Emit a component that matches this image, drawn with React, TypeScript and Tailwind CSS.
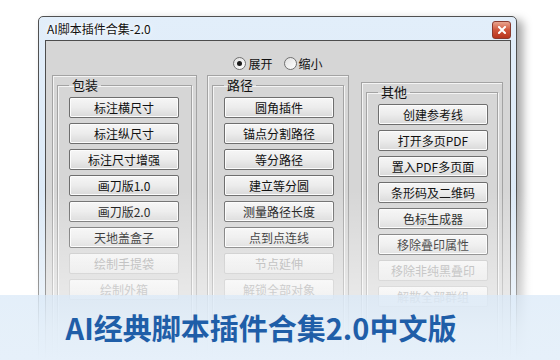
const ui = "font-['Noto_Sans_CJK_SC','Noto_Sans',sans-serif]";

type Item = { label: string; off?: boolean };

const baozhuang: Item[] = [
  { label: "标注横尺寸" },
  { label: "标注纵尺寸" },
  { label: "标注尺寸增强" },
  { label: "画刀版1.0" },
  { label: "画刀版2.0" },
  { label: "天地盖盒子" },
  { label: "绘制手提袋", off: true },
  { label: "绘制外箱", off: true },
];

const lujing: Item[] = [
  { label: "圆角插件" },
  { label: "锚点分割路径" },
  { label: "等分路径" },
  { label: "建立等分圆" },
  { label: "测量路径长度" },
  { label: "点到点连线" },
  { label: "节点延伸", off: true },
  { label: "解锁全部对象", off: true },
];

const qita: Item[] = [
  { label: "创建参考线" },
  { label: "打开多页PDF" },
  { label: "置入PDF多页面" },
  { label: "条形码及二维码" },
  { label: "色标生成器" },
  { label: "移除叠印属性" },
  { label: "移除非纯黑叠印", off: true },
  { label: "解散全部群组", off: true },
];

function Btn({ label, off }: Item) {
  return (
    <button
      className={
        "w-[110px] h-[21px] rounded-[2px] border text-[12px] leading-none flex items-center justify-center " +
        (off
          ? "border-[#c2c2c2] bg-gradient-to-b from-[#f4f4f4] to-[#e6e6e6] text-[#a8a8a8]"
          : "border-[#6e6e6e] bg-gradient-to-b from-[#f6f6f6] via-[#ececec] to-[#d9d9d9] text-[#111] shadow-[inset_0_0_0_1px_#fcfcfc]")
      }
    >
      {label}
    </button>
  );
}

function Group({ title, items, w }: { title: string; items: Item[]; w: string }) {
  return (
    <div className={"border border-[#a3a3a3] shadow-[inset_1px_1px_0_#f4f4f4] px-1 h-[320px] " + w}>
      <fieldset className="border border-[#a3a3a3] shadow-[inset_1px_1px_0_#f4f4f4,1px_1px_0_#f4f4f4] h-full pt-[3px] pl-[11px]">
        <legend className="px-[3px] text-[13px] leading-[18px] text-[#111]">{title}</legend>
        <div className="flex flex-col gap-[5px]">
          {items.map((it) => (
            <Btn key={it.label} {...it} />
          ))}
        </div>
      </fieldset>
    </div>
  );
}

function Radio({ label, on }: { label: string; on?: boolean }) {
  return (
    <label className="flex items-center gap-[2px] text-[12px] text-[#111]">
      <span className="w-[13px] h-[13px] rounded-full border border-[#707070] bg-gradient-to-br from-[#e0e0e0] to-white flex items-center justify-center">
        {on && <span className="w-[5px] h-[5px] rounded-full bg-[#1a1a1a]" />}
      </span>
      {label}
    </label>
  );
}

export default function App() {
  return (
    <div className={"w-[560px] h-[360px] bg-white relative overflow-hidden " + ui}>
      <div className="pt-4 pl-[38px]">
        {/* window */}
        <div className="w-[479px] h-[360px] border border-[#505050] rounded-t-[5px] bg-gradient-to-b from-[#e2eefa] to-[#d8e6f4] shadow-[6px_4px_10px_rgba(0,0,0,0.35)] flex flex-col">
          <div className="h-[23px] flex items-center justify-between pl-2 pr-[5px]">
            <span className="text-[12px] text-[#111] [text-shadow:0_0_6px_#fff,0_0_3px_#fff]">AI脚本插件合集-2.0</span>
            <button className="w-[19px] h-[18px] mt-[3px] rounded-[3px] border border-[#8a3a2e] bg-gradient-to-b from-[#e8a48f] via-[#cf553b] to-[#b8341d] flex items-center justify-center">
              <svg width="8" height="8" viewBox="0 0 8 8">
                <path d="M1 1L7 7M7 1L1 7" stroke="#fff" strokeWidth="2" strokeLinecap="square" />
              </svg>
            </button>
          </div>
          {/* client */}
          <div className="flex-1 ml-[6px] mr-[5px] border border-[#4d4d4d] bg-[#d6d6d6] overflow-hidden">
            <div className="flex justify-center gap-[11px] pt-[11px] h-[34px]">
              <Radio label="展开" on />
              <Radio label="缩小" />
            </div>
            <div className="flex items-start pl-[6px]">
              <Group title="包装" items={baozhuang} w="w-[145px]" />
              <div className="w-[10px]" />
              <Group title="路径" items={lujing} w="w-[142px]" />
              <div className="w-[12px]" />
              <div className="pt-[7px]">
                <Group title="其他" items={qita} w="w-[142px]" />
              </div>
            </div>
          </div>
        </div>
      </div>

      {/* fade + caption band */}
      <div className="absolute left-0 right-0 top-[190px] h-[105px] bg-gradient-to-b from-white/0 to-white/45" />
      <div className="absolute left-0 right-0 bottom-0 h-[65px] bg-gradient-to-b from-[#dfecf9]/85 via-[#e4eff9]/95 to-[#e6f0fa] flex items-center justify-center pr-[38px]">
        <span className="text-[29px] font-bold text-[#1f5ea8] leading-none">AI经典脚本插件合集2.0中文版</span>
      </div>
    </div>
  );
}
